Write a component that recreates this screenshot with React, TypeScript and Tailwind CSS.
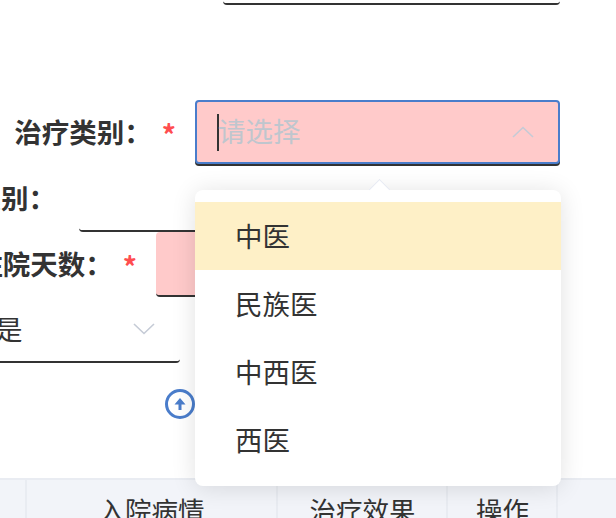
import React from "react";

const options = ["中医", "民族医", "中西医", "西医"];

function Chevron({ up, className }: { up?: boolean; className?: string }) {
  return (
    <svg width="22" height="12" viewBox="0 0 22 12" fill="none" className={className}>
      <path
        d={up ? "M1 11 L11 1.5 L21 11" : "M1 1 L11 10.5 L21 1"}
        stroke="#c5cbd6"
        strokeWidth="1.6"
      />
    </svg>
  );
}

function Label({ text, width, star }: { text: string; width: string; star?: boolean }) {
  return (
    <div className={`flex h-[64px] shrink-0 items-center justify-end whitespace-nowrap ${width}`}>
      <span className="text-[27.5px] font-bold text-[#333]">{text}</span>
      {star && <span className="ml-[10px] mr-[19px] mt-[3px] text-[28px] leading-none font-bold text-[#ff4d4f]">*</span>}
    </div>
  );
}

export default function App() {
  return (
    <div
      className="relative h-[518px] w-[616px] overflow-hidden bg-white"
      style={{ fontFamily: '"Noto Sans CJK SC", "Noto Sans", sans-serif' }}
    >
      {/* field cut off at the top */}
      <div className="ml-[223px] h-[5px] w-[337px] rounded-b-[4px] border-b-2 border-[#333]" />

      {/* 治疗类别 */}
      <div className="mt-[95px] flex h-[66px]">
        <Label text="治疗类别：" width="w-[195px]" star />
        <div className="flex h-[64px] w-[365px] items-center rounded-[4px] border-2 border-[#4a7dcb] bg-[#ffcaca] pl-[20px] pr-[24px] shadow-[0_2px_0_#333]">
          <span className="h-[37px] w-[2px] bg-[#333]" />
          <span className="-mt-[3px] -ml-[1px] flex-1 text-[27.5px] text-[#bfc6ce]">请选择</span>
          <Chevron up />
        </div>
      </div>

      {/* 医疗类别 */}
      <div className="flex h-[66px]">
        <Label text="医疗类别：" width="w-[56px]" />
        <div className="ml-[23px] mt-[20px] h-[46px] w-[480px] rounded-b-[4px] border-b-2 border-[#333]" />
      </div>

      {/* 住院天数 */}
      <div className="flex h-[65px]">
        <Label text="住院天数：" width="w-[156px]" star />
        <div className="h-[65px] w-[404px] rounded-[4px] border-b-2 border-[#333] bg-[#ffcaca]" />
      </div>

      {/* 是否 */}
      <div className="flex h-[66px] w-[180px] items-center justify-between rounded-br-[4px] border-b-2 border-[#333] pr-[25px]">
        <span className="-ml-[5px] text-[27.5px] text-[#333]">是</span>
        <Chevron />
      </div>

      <div className="ml-[165px] mt-[26px] flex h-[30px] w-[30px] items-center justify-center rounded-full border-[3px] border-[#4a7dcb]">
        <svg width="14" height="16" viewBox="0 0 14 16" fill="none">
          <path d="M7 2 L1.5 8.5 H5.5 V14 H8.5 V8.5 H12.5 Z" fill="#4a7dcb" />
        </svg>
      </div>

      {/* table header */}
      <div className="mt-[59px] flex h-[40px] border-t-2 border-[#e9ecf2] bg-[#f2f4f9] text-[26.5px] leading-[60px] text-[#333]">
        <div className="w-[27px] border-r-2 border-[#e9ecf2]" />
        <div className="flex w-[251px] justify-center whitespace-nowrap border-r-2 border-[#e9ecf2]">入院病情</div>
        <div className="flex w-[170px] justify-center whitespace-nowrap border-r-2 border-[#e9ecf2] pl-[1px]">治疗效果</div>
        <div className="flex w-[110px] justify-center whitespace-nowrap border-r-2 border-[#e9ecf2] pl-[1px]">操作</div>
      </div>

      {/* dropdown */}
      <div className="absolute left-[195px] top-[190px] w-[366px] rounded-[8px] bg-white py-[12px] shadow-[0_2px_24px_rgba(0,0,0,0.12)]">
        <div className="absolute -top-[8px] left-[177px] h-[15px] w-[15px] rotate-45 border-l border-t border-[#e6e9f2] bg-white" />
        {options.map((o, i) => (
          <div
            key={o}
            className={`relative flex h-[68px] items-center pl-[40px] text-[27.5px] text-[#333] ${
              i === 0 ? "bg-[#fef0c7]" : ""
            }`}
          >
            {o}
          </div>
        ))}
      </div>
    </div>
  );
}
